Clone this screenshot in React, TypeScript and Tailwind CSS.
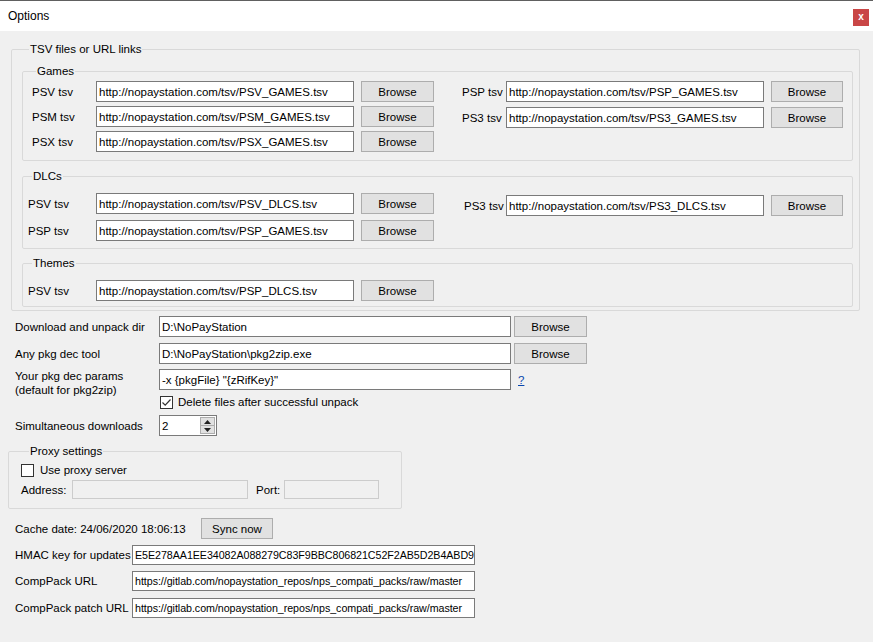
import type { ReactNode } from 'react';

const FONT = "font-['Liberation_Sans',Arial,sans-serif]";

function TextBox({ value, w, h = 'h-[21px]', size = '' }: { value: string; w: string; h?: string; size?: string }) {
  return (
    <div className={`${w} ${h} ${size} flex shrink-0 items-center overflow-hidden whitespace-nowrap border border-[#7a7a7a] bg-white pl-[2px] text-black`}>
      {value}
    </div>
  );
}

function Browse({ w = 'w-[73px]', label = 'Browse' }: { w?: string; label?: string }) {
  return (
    <button
      type="button"
      className={`${w} flex h-[21px] shrink-0 items-center justify-center border border-[#adadad] bg-[#e1e1e1] text-black`}
    >
      {label}
    </button>
  );
}

function Group({ title, legendMl, className, children }: { title: string; legendMl: string; className: string; children: ReactNode }) {
  return (
    <fieldset className={`rounded-[2px] border border-[#d9d9d9] ${className}`}>
      <legend className={`${legendMl} px-[1px] leading-[14px] text-black`}>{title}</legend>
      {children}
    </fieldset>
  );
}

function CheckBox({ checked }: { checked?: boolean }) {
  return (
    <span className="flex h-[13px] w-[13px] shrink-0 items-center justify-center border border-[#333] bg-white">
      {checked && (
        <svg width="11" height="11" viewBox="0 0 11 11" fill="none">
          <path d="M1.5 5.5 L4.2 8.2 L9.5 2.5" stroke="#333" strokeWidth="1.2" />
        </svg>
      )}
    </span>
  );
}

function TsvRow({ label, value, labelW }: { label: string; value: string; labelW: string }) {
  return (
    <div className="flex items-center">
      <span className={`${labelW} shrink-0`}>{label}</span>
      <TextBox value={value} w="w-[258px]" />
      <div className="ml-[7px]">
        <Browse />
      </div>
    </div>
  );
}

function RightRow({ label, value, labelW = 'w-[44px]' }: { label: string; value: string; labelW?: string }) {
  return (
    <div className="flex items-center">
      <span className={`${labelW} shrink-0`}>{label}</span>
      <TextBox value={value} w="w-[258px]" />
      <div className="ml-[7px]">
        <Browse w="w-[72px]" />
      </div>
    </div>
  );
}

function FieldRow({ label, value, mt }: { label: string; value: string; mt: string }) {
  return (
    <div className={`${mt} ml-[15px] flex items-center`}>
      <span className="w-[144px] shrink-0">{label}</span>
      <TextBox value={value} w="w-[352px]" />
      <div className="ml-[3px]">
        <Browse />
      </div>
    </div>
  );
}

function UpdateRow({ label, value, mt }: { label: string; value: string; mt: string }) {
  return (
    <div className={`${mt} ml-[15px] flex items-center`}>
      <span className="w-[117px] shrink-0">{label}</span>
      <TextBox value={value} w="w-[343px]" h="h-[20px]" size="text-[10.7px] tracking-[-0.05px]" />
    </div>
  );
}

export default function App() {
  return (
    <div className={`${FONT} h-[642px] w-[873px] overflow-hidden bg-[#f0f0f0] text-[11.5px] leading-[14px] text-black`}>
      {/* title bar */}
      <div className="flex h-[31px] items-center justify-between border-t border-[#606060] bg-white pl-[8px] pr-[4px]">
        <span className="text-[12px]">Options</span>
        <span className="mt-[2px] flex h-[17px] w-[16px] items-center justify-center bg-[#c94646] text-[10px] font-bold leading-none text-white">
          x
        </span>
      </div>

      {/* TSV files */}
      <Group title="TSV files or URL links" legendMl="ml-[7px]" className="ml-[11px] mt-[11px] w-[848px] pb-[3px] pl-[10px] pr-[6px]">
        <Group title="Games" legendMl="ml-[4px]" className="mt-[8px] w-[831px] pb-[8px] pt-[3px] pl-[9px]">
          <div className="flex">
            <div className="flex flex-col gap-[4px]">
              <TsvRow label="PSV tsv" value="http://nopaystation.com/tsv/PSV_GAMES.tsv" labelW="w-[64px]" />
              <TsvRow label="PSM tsv" value="http://nopaystation.com/tsv/PSM_GAMES.tsv" labelW="w-[64px]" />
              <TsvRow label="PSX tsv" value="http://nopaystation.com/tsv/PSX_GAMES.tsv" labelW="w-[64px]" />
            </div>
            <div className="ml-[28px] flex flex-col gap-[5px]">
              <RightRow label="PSP tsv" value="http://nopaystation.com/tsv/PSP_GAMES.tsv" />
              <RightRow label="PS3 tsv" value="http://nopaystation.com/tsv/PS3_GAMES.tsv" />
            </div>
          </div>
        </Group>

        <Group title="DLCs" legendMl="ml-[4px]" className="mt-[8px] w-[831px] pb-[7px] pt-[10px] pl-[5px]">
          <div className="flex">
            <div className="flex flex-col gap-[6px]">
              <TsvRow label="PSV tsv" value="http://nopaystation.com/tsv/PSV_DLCS.tsv" labelW="w-[68px]" />
              <TsvRow label="PSP tsv" value="http://nopaystation.com/tsv/PSP_GAMES.tsv" labelW="w-[68px]" />
            </div>
            <div className="ml-[30px] mt-[2px]">
              <RightRow label="PS3 tsv" value="http://nopaystation.com/tsv/PS3_DLCS.tsv" labelW="w-[42px]" />
            </div>
          </div>
        </Group>

        <Group title="Themes" legendMl="ml-[4px]" className="mt-[7px] w-[831px] pb-[5px] pt-[10px] pl-[5px]">
          <TsvRow label="PSV tsv" value="http://nopaystation.com/tsv/PSP_DLCS.tsv" labelW="w-[68px]" />
        </Group>
      </Group>

      {/* download settings */}
      <FieldRow label="Download and unpack dir" value="D:\NoPayStation" mt="mt-[5px]" />
      <FieldRow label="Any pkg dec tool" value="D:\NoPayStation\pkg2zip.exe" mt="mt-[6px]" />
      <div className="ml-[15px] mt-[5px] flex items-start">
        <span className="w-[144px] shrink-0">
          Your pkg dec params
          <br />
          (default for pkg2zip)
        </span>
        <TextBox value={'-x {pkgFile} "{zRifKey}"'} w="w-[352px]" />
        <a className="ml-[7px] mt-[4px] text-[#0645ad] underline">?</a>
      </div>
      <div className="ml-[160px] mt-[-2px] flex items-center gap-[5px]">
        <CheckBox checked />
        <span>Delete files after successful unpack</span>
      </div>
      <div className="ml-[15px] mt-[6px] flex items-center">
        <span className="w-[144px] shrink-0">Simultaneous downloads</span>
        <div className="flex h-[21px] w-[58px] items-stretch border border-[#7a7a7a] bg-white">
          <span className="flex flex-1 items-center pl-[2px]">2</span>
          <div className="my-[1px] mr-[1px] flex w-[15px] flex-col border border-[#adadad] bg-[#e1e1e1]">
            <span className="flex flex-1 items-center justify-center border-b border-[#adadad]">
              <svg width="7" height="4" viewBox="0 0 7 4"><path d="M0 4 L3.5 0 L7 4 Z" fill="#222" /></svg>
            </span>
            <span className="flex flex-1 items-center justify-center">
              <svg width="7" height="4" viewBox="0 0 7 4"><path d="M0 0 L3.5 4 L7 0 Z" fill="#222" /></svg>
            </span>
          </div>
        </div>
      </div>

      {/* proxy */}
      <Group title="Proxy settings" legendMl="ml-[8px]" className="ml-[8px] mt-[8px] w-[394px] pb-[9px] pl-[12px] pt-[5px]">
        <div className="flex items-center gap-[6px]">
          <CheckBox />
          <span>Use proxy server</span>
        </div>
        <div className="mt-[3px] flex items-center">
          <span className="w-[51px] shrink-0">Address:</span>
          <div className="h-[19px] w-[176px] border border-[#cccccc] bg-[#f0f0f0]" />
          <span className="ml-[8px] w-[28px] shrink-0">Port:</span>
          <div className="h-[19px] w-[95px] border border-[#cccccc] bg-[#f0f0f0]" />
        </div>
      </Group>

      {/* cache */}
      <div className="ml-[15px] mt-[9px] flex items-center">
        <span className="w-[186px] shrink-0">Cache date: 24/06/2020 18:06:13</span>
        <Browse w="w-[72px]" label="Sync now" />
      </div>

      <UpdateRow label="HMAC key for updates" value="E5E278AA1EE34082A088279C83F9BBC806821C52F2AB5D2B4ABD9" mt="mt-[6px]" />
      <UpdateRow label="CompPack URL" value="https://gitlab.com/nopaystation_repos/nps_compati_packs/raw/master" mt="mt-[6px]" />
      <UpdateRow label="CompPack patch URL" value="https://gitlab.com/nopaystation_repos/nps_compati_packs/raw/master" mt="mt-[7px]" />
    </div>
  );
}
